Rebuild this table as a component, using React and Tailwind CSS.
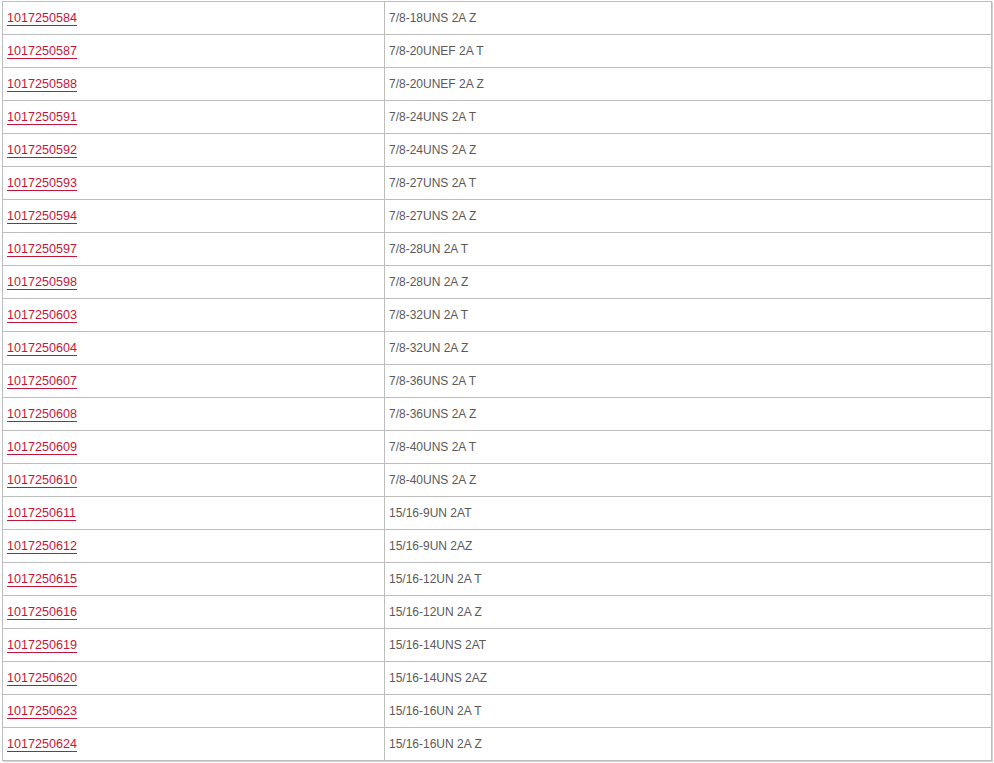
import React from "react";

const rows = [
  ["1017250584", "7/8-18UNS 2A Z"],
  ["1017250587", "7/8-20UNEF 2A T"],
  ["1017250588", "7/8-20UNEF 2A Z"],
  ["1017250591", "7/8-24UNS 2A T"],
  ["1017250592", "7/8-24UNS 2A Z"],
  ["1017250593", "7/8-27UNS 2A T"],
  ["1017250594", "7/8-27UNS 2A Z"],
  ["1017250597", "7/8-28UN 2A T"],
  ["1017250598", "7/8-28UN 2A Z"],
  ["1017250603", "7/8-32UN 2A T"],
  ["1017250604", "7/8-32UN 2A Z"],
  ["1017250607", "7/8-36UNS 2A T"],
  ["1017250608", "7/8-36UNS 2A Z"],
  ["1017250609", "7/8-40UNS 2A T"],
  ["1017250610", "7/8-40UNS 2A Z"],
  ["1017250611", "15/16-9UN 2AT"],
  ["1017250612", "15/16-9UN 2AZ"],
  ["1017250615", "15/16-12UN 2A T"],
  ["1017250616", "15/16-12UN 2A Z"],
  ["1017250619", "15/16-14UNS 2AT"],
  ["1017250620", "15/16-14UNS 2AZ"],
  ["1017250623", "15/16-16UN 2A T"],
  ["1017250624", "15/16-16UN 2A Z"],
];

const App = () => {
  return (
    <div className="bg-white w-[994px] h-[763px] overflow-hidden pt-px pl-[2px] font-['Liberation_Sans',Arial,sans-serif]">
      <table className="w-[990px] border-collapse border border-[#bdbdbd] shadow-[1px_1px_0_#d4d4d4] text-[12px]">
        <tbody>
          {rows.map(([part, thread]) => (
            <tr key={part} className="h-[33px]">
              <td className="w-[382px] border border-[#bdbdbd] pl-[4px] align-middle">
                <a href="#" className="text-[12.6px] text-[#c4163a] underline underline-offset-[3px]">
                  {part}
                </a>
              </td>
              <td className="border border-[#bdbdbd] pl-[4px] align-middle text-[#5a5a5a]">
                {thread}
              </td>
            </tr>
          ))}
        </tbody>
      </table>
    </div>
  );
};

export default App;
